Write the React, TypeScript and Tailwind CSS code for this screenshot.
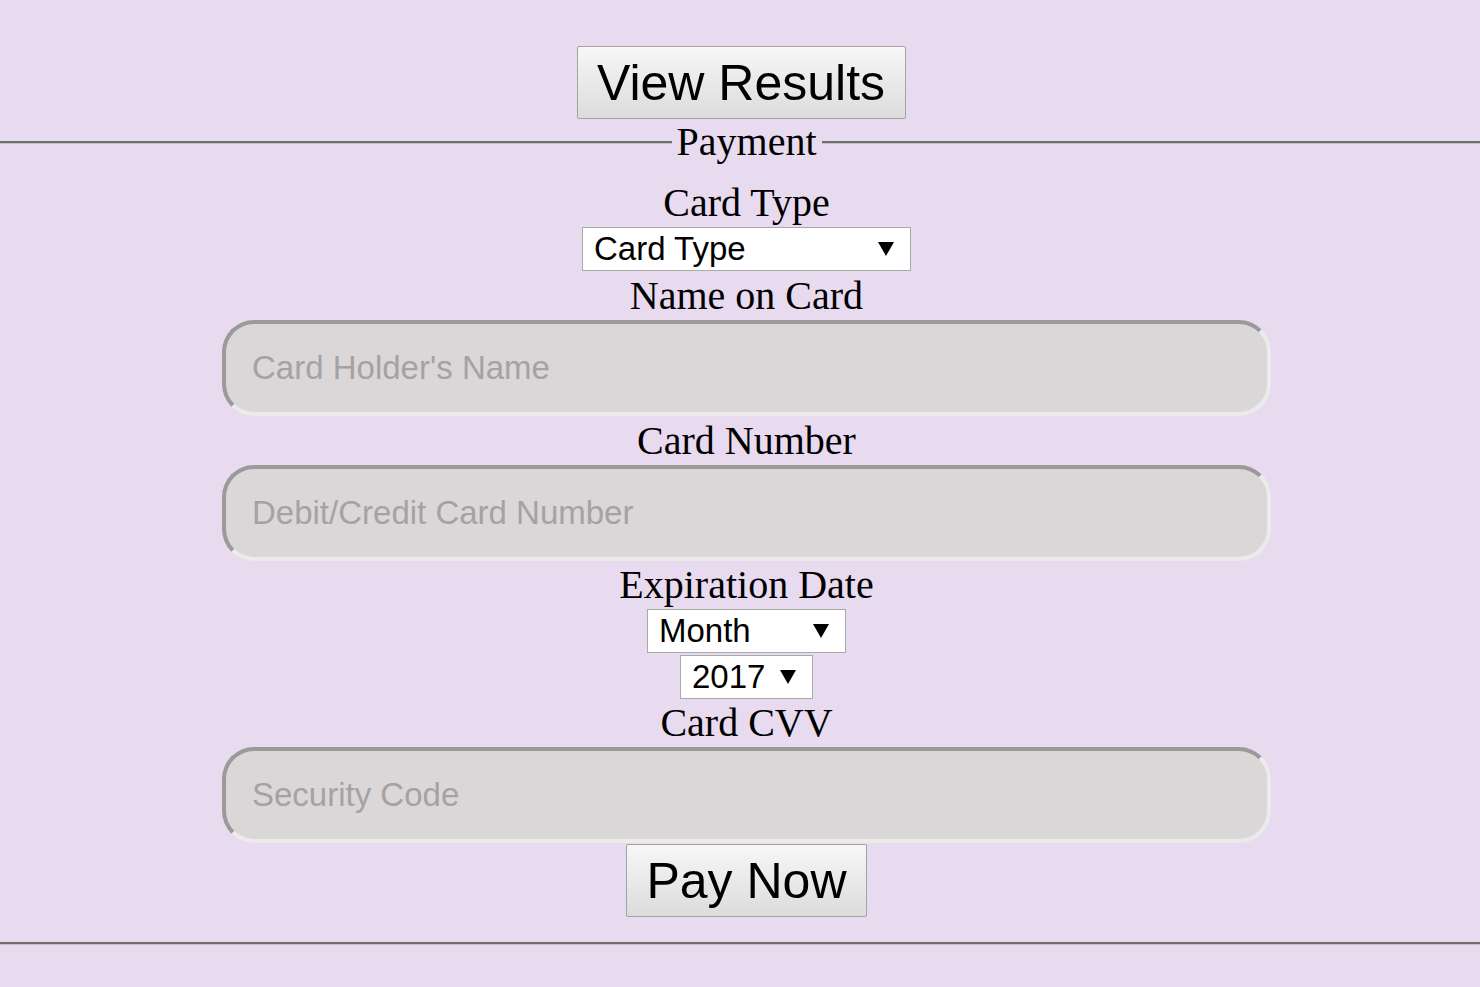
import React from 'react';

const sans = "font-['Liberation_Sans',Arial,sans-serif]";

function Rule({ extra }: { extra?: string }) {
  return <div className={`grow h-[3px] border-t-2 border-t-[#6e6e6e] border-b border-b-[#c3c3c3] ${extra ?? 'basis-0'}`} />;
}

function Arrow() {
  return (
    <svg width="16" height="14" viewBox="0 0 16 14" className="shrink-0">
      <path d="M0 0 H16 L8 14 Z" fill="#000" />
    </svg>
  );
}

function Select({ width, options }: { width: string; options: string[] }) {
  return (
    <div className={`flex items-center h-[44px] ${width} border border-[#a9a9a9] bg-white pl-[11px] pr-[16px]`}>
      <select className={`appearance-none bg-transparent flex-1 min-w-0 text-[33px] leading-[38px] text-black outline-none ${sans}`}>
        {options.map((o) => (
          <option key={o}>{o}</option>
        ))}
      </select>
      <Arrow />
    </div>
  );
}

function Field({ placeholder }: { placeholder: string }) {
  return (
    <input
      type="text"
      placeholder={placeholder}
      className={`box-border w-[1049px] h-[96px] rounded-[32px] border-4 border-t-[#9a9a9a] border-l-[#9a9a9a] border-b-[#ebebeb] border-r-[#ebebeb] bg-[#dbd7d8] pl-[26px] text-[33px] text-black placeholder:text-[#a3a3a3] outline-none ${sans}`}
    />
  );
}

function Label({ children, tall }: { children: React.ReactNode; tall?: boolean }) {
  return (
    <label className={`block text-[40px] text-center ${tall ? 'h-[49px] leading-[49px]' : 'h-[48px] leading-[48px]'}`}>
      {children}
    </label>
  );
}

function BigButton({ children, width }: { children: React.ReactNode; width: string }) {
  return (
    <button
      className={`${width} h-[73px] rounded-[2px] border border-[#a3a3a3] bg-gradient-to-b from-[#f7f7f7] to-[#dcdcdc] text-[50px] leading-none text-black ${sans}`}
    >
      {children}
    </button>
  );
}

export default function App() {
  return (
    <div className="min-h-[987px] bg-[#e8daef] font-['Liberation_Serif','Times_New_Roman',serif] text-black">
      <div className="pt-[46px] flex justify-center pl-[2px]">
        <BigButton width="w-[329px]">View Results</BigButton>
      </div>

      <fieldset className="border-0 m-0 p-0">
        <div className="flex items-center h-[46px]">
          <Rule extra="basis-[13px]" />
          <span className="px-[5px] text-[40px] leading-[46px]">Payment</span>
          <Rule />
        </div>

        <div className="flex flex-col items-center pl-[13px] pt-[14px] pb-[25px]">
          <Label>Card Type</Label>
          <Select width="w-[329px]" options={['Card Type', 'Visa', 'MasterCard', 'American Express']} />

          <Label tall>Name on Card</Label>
          <Field placeholder="Card Holder's Name" />

          <Label tall>Card Number</Label>
          <Field placeholder="Debit/Credit Card Number" />

          <Label>Expiration Date</Label>
          <Select width="w-[199px]" options={['Month', '01', '02', '03', '04', '05', '06', '07', '08', '09', '10', '11', '12']} />
          <div className="h-[2px]" />
          <Select width="w-[133px]" options={['2017', '2018', '2019', '2020', '2021', '2022']} />

          <Label>Card CVV</Label>
          <Field placeholder="Security Code" />

          <div className="mt-px">
            <BigButton width="w-[241px]">Pay Now</BigButton>
          </div>
        </div>

        <div className="flex">
          <Rule />
        </div>
      </fieldset>
    </div>
  );
}
